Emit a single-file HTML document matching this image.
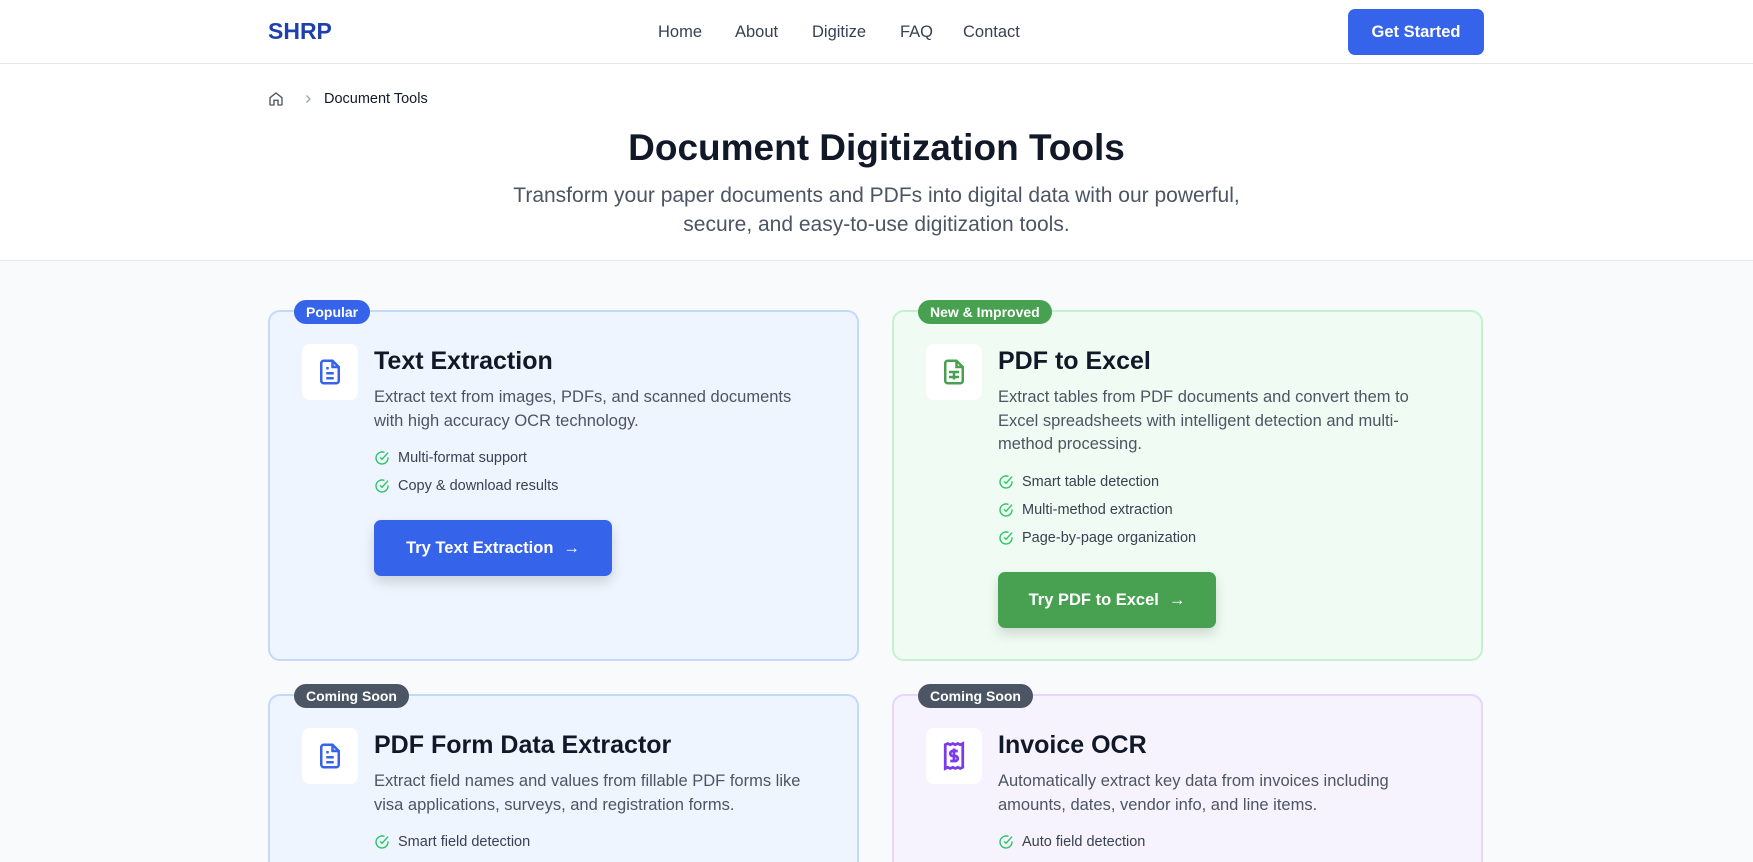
<!DOCTYPE html>
<html><head><meta charset="utf-8"><style>
*{box-sizing:border-box;margin:0;padding:0}
html,body{width:1753px;height:862px;overflow:hidden}
body{font-family:"Liberation Sans",sans-serif;background:#f8fafc;color:#111827}
#w{position:relative;width:1753px;height:862px;overflow:hidden}
.nav{position:absolute;left:0;top:0;width:1753px;height:64px;background:#fff;border-bottom:1px solid #e5e7eb}
.logo{position:absolute;left:268px;top:18px;font-size:23px;font-weight:bold;color:#1e40af}
.nav a{position:absolute;top:23px;font-size:16.5px;color:#374151;text-decoration:none}
.gs{position:absolute;left:1348px;top:9px;width:136px;height:46px;background:#3563e9;color:#fff;border-radius:7px;font-weight:bold;font-size:16.5px;text-align:center;line-height:46px}
.hdr{position:absolute;left:0;top:64px;width:1753px;height:197px;background:#fff;border-bottom:1px solid #e5e7eb}
.bc{position:absolute;top:91px;left:268px;font-size:14.5px;color:#111827}
h1{position:absolute;top:127px;left:0;width:1753px;text-align:center;font-size:37px;font-weight:bold;color:#111827}
.sub{position:absolute;top:181px;left:0;width:1753px;text-align:center;font-size:21px;line-height:29px;color:#4b5563}
.card{position:absolute;width:591px;border:2px solid;border-radius:12px}
.badge{position:absolute;top:-12px;left:24px;height:24px;padding:0 12px;border-radius:12px;color:#fff;font-size:14px;font-weight:bold;line-height:24px}
.ib{position:absolute;left:32px;top:32px;width:56px;height:56px;background:#fff;border-radius:8px;display:flex;align-items:center;justify-content:center}
.ct{position:absolute;left:104px;top:35px;font-size:25px;font-weight:bold;color:#111827}
.cd{position:absolute;left:104px;top:74px;width:440px;font-size:16.5px;line-height:23.5px;color:#4b5563}
.ft{position:absolute;left:104px;font-size:14.5px;color:#374151;display:flex;align-items:center;gap:8px}
.btn{position:absolute;left:104px;width:238px;height:56px;border-radius:7px;color:#fff;font-weight:bold;font-size:16.5px;display:flex;align-items:center;justify-content:center;gap:10px;box-shadow:0 6px 12px rgba(0,0,0,.15)}
</style></head><body><div id="w">
<div class="nav"><div class="logo">SHRP</div>
<a style="left:658px">Home</a><a style="left:735px">About</a><a style="left:812px">Digitize</a><a style="left:900px">FAQ</a><a style="left:963px">Contact</a>
<div class="gs">Get Started</div></div>
<div class="hdr"></div>
<svg style="position:absolute;left:268px;top:91px" width="16" height="16" viewBox="0 0 24 24" fill="none" stroke="#4b5563" stroke-width="2"><path d="M3 10l9-7 9 7v10a1 1 0 0 1-1 1h-5v-7h-6v7H4a1 1 0 0 1-1-1z"/></svg>
<svg style="position:absolute;left:302px;top:93px" width="12" height="12" viewBox="0 0 24 24" fill="none" stroke="#9ca3af" stroke-width="2.5"><path d="M9 5l7 7-7 7"/></svg>
<div class="bc" style="left:324px">Document Tools</div>
<h1>Document Digitization Tools</h1>
<div class="sub">Transform your paper documents and PDFs into digital data with our powerful,<br>secure, and easy-to-use digitization tools.</div>

<div class="card" style="left:268px;top:310px;height:351px;background:#eff5fe;border-color:#c3d9fb">
<div class="badge" style="background:#3563e9">Popular</div>
<div class="ib"><svg width="30" height="30" viewBox="0 0 24 24" fill="none" stroke="#3563e9" stroke-width="2"><path d="M14 3H7a2 2 0 0 0-2 2v14a2 2 0 0 0 2 2h10a2 2 0 0 0 2-2V8z"/><path d="M14 3v5h5M9 13h6M9 17h6M9 9h2"/></svg></div>
<div class="ct">Text Extraction</div>
<div class="cd">Extract text from images, PDFs, and scanned documents with high accuracy OCR technology.</div>
<div class="ft" style="top:138px"><svg width="16" height="16" viewBox="0 0 24 24" fill="none" stroke="#22c55e" stroke-width="2"><path d="M21 11v1a9 9 0 1 1-5.3-8.2"/><path d="M21 4L12 14l-3-3"/></svg>Multi-format support</div>
<div class="ft" style="top:166px"><svg width="16" height="16" viewBox="0 0 24 24" fill="none" stroke="#22c55e" stroke-width="2"><path d="M21 11v1a9 9 0 1 1-5.3-8.2"/><path d="M21 4L12 14l-3-3"/></svg>Copy &amp; download results</div>
<div class="btn" style="top:208px;background:#3563e9">Try Text Extraction <span>→</span></div>
</div>

<div class="card" style="left:892px;top:310px;height:351px;background:#f0fcf3;border-color:#c4f1d0">
<div class="badge" style="background:#48a150">New &amp; Improved</div>
<div class="ib"><svg width="30" height="30" viewBox="0 0 24 24" fill="none" stroke="#48a150" stroke-width="2"><path d="M14 3H7a2 2 0 0 0-2 2v14a2 2 0 0 0 2 2h10a2 2 0 0 0 2-2V8z"/><path d="M14 3v5h5M8 12h8M8 16h8M12 12v6"/></svg></div>
<div class="ct">PDF to Excel</div>
<div class="cd">Extract tables from PDF documents and convert them to Excel spreadsheets with intelligent detection and multi-method processing.</div>
<div class="ft" style="top:162px"><svg width="16" height="16" viewBox="0 0 24 24" fill="none" stroke="#22c55e" stroke-width="2"><path d="M21 11v1a9 9 0 1 1-5.3-8.2"/><path d="M21 4L12 14l-3-3"/></svg>Smart table detection</div>
<div class="ft" style="top:190px"><svg width="16" height="16" viewBox="0 0 24 24" fill="none" stroke="#22c55e" stroke-width="2"><path d="M21 11v1a9 9 0 1 1-5.3-8.2"/><path d="M21 4L12 14l-3-3"/></svg>Multi-method extraction</div>
<div class="ft" style="top:218px"><svg width="16" height="16" viewBox="0 0 24 24" fill="none" stroke="#22c55e" stroke-width="2"><path d="M21 11v1a9 9 0 1 1-5.3-8.2"/><path d="M21 4L12 14l-3-3"/></svg>Page-by-page organization</div>
<div class="btn" style="top:260px;width:218px;background:#48a150">Try PDF to Excel <span>→</span></div>
</div>

<div class="card" style="left:268px;top:694px;height:300px;background:#eff5fe;border-color:#c3d9fb">
<div class="badge" style="background:#4b5563">Coming Soon</div>
<div class="ib"><svg width="30" height="30" viewBox="0 0 24 24" fill="none" stroke="#3563e9" stroke-width="2"><path d="M14 3H7a2 2 0 0 0-2 2v14a2 2 0 0 0 2 2h10a2 2 0 0 0 2-2V8z"/><path d="M14 3v5h5M9 13h6M9 17h6M9 9h2"/></svg></div>
<div class="ct">PDF Form Data Extractor</div>
<div class="cd">Extract field names and values from fillable PDF forms like visa applications, surveys, and registration forms.</div>
<div class="ft" style="top:138px"><svg width="16" height="16" viewBox="0 0 24 24" fill="none" stroke="#22c55e" stroke-width="2"><path d="M21 11v1a9 9 0 1 1-5.3-8.2"/><path d="M21 4L12 14l-3-3"/></svg>Smart field detection</div>
</div>

<div class="card" style="left:892px;top:694px;height:300px;background:#f7f3fe;border-color:#e6d6fc">
<div class="badge" style="background:#4b5563">Coming Soon</div>
<div class="ib"><svg width="30" height="30" viewBox="0 0 24 24" fill="none" stroke="#7c3aed" stroke-width="2.2"><path d="M5 2v20l2-1 2 1 2-1 2 1 2-1 2 1 2-1V2l-2 1-2-1-2 1-2-1-2 1-2-1-2 1z"/><path d="M15 8h-4a2 2 0 0 0 0 4h2a2 2 0 0 1 0 4H9M12 17V6"/></svg></div>
<div class="ct">Invoice OCR</div>
<div class="cd">Automatically extract key data from invoices including amounts, dates, vendor info, and line items.</div>
<div class="ft" style="top:138px"><svg width="16" height="16" viewBox="0 0 24 24" fill="none" stroke="#22c55e" stroke-width="2"><path d="M21 11v1a9 9 0 1 1-5.3-8.2"/><path d="M21 4L12 14l-3-3"/></svg>Auto field detection</div>
</div>
</div></body></html>
